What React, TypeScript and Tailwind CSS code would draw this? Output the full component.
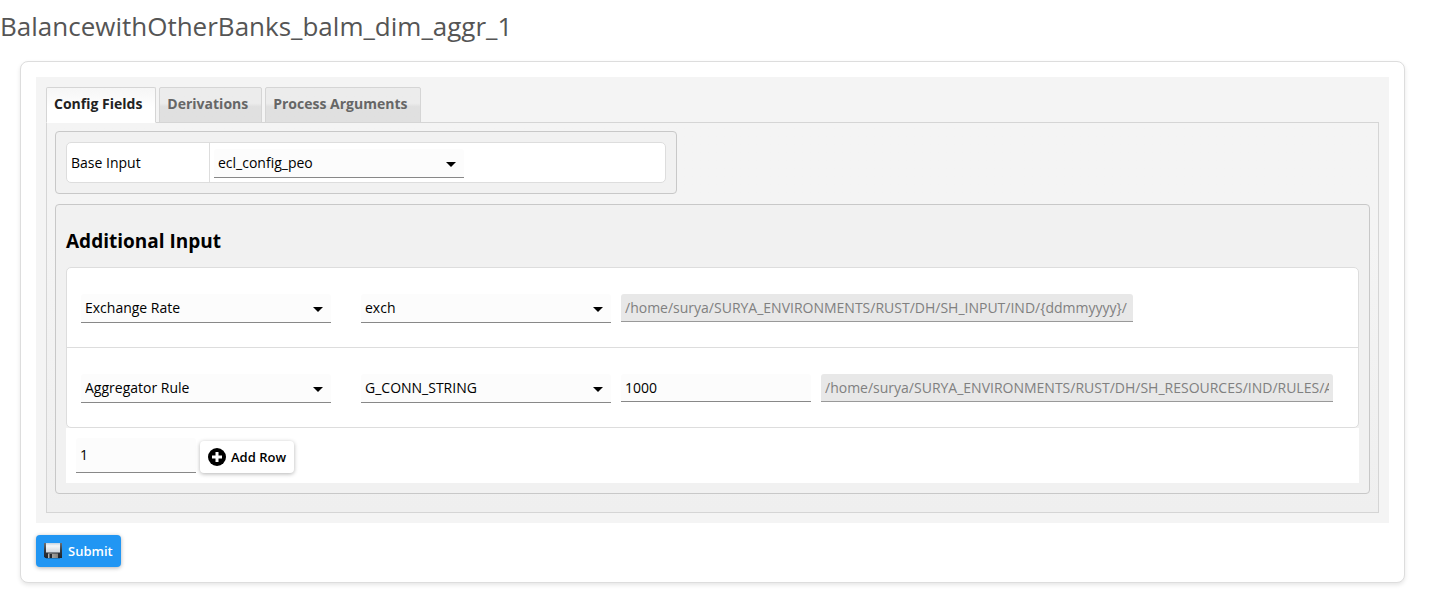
import { useState } from "react";
import type { ReactNode } from "react";

const FIELD = "block w-full rounded-t-[3px] border-b border-[#888] bg-[#fcfcfc] px-1 text-sm outline-none";

function Select({ label, id, options }: { label?: string; id: string; options: string[] }) {
  return (
    <div className="relative w-[250px] shrink-0">
      <select
        id={id}
        aria-label={label}
        className="block h-[29px] w-full appearance-none rounded-t-[3px] border-b border-[#888] bg-[#fcfcfc] px-1 text-sm text-black outline-none"
      >
        {options.map((o) => (
          <option key={o}>{o}</option>
        ))}
      </select>
      <svg className="pointer-events-none absolute top-[13px] right-2 h-[5px] w-[10px]" viewBox="0 0 10 5">
        <path d="M0 0h10L5 5z" fill="#000" />
      </svg>
    </div>
  );
}

function PathField({ label, value }: { label: string; value: string }) {
  return (
    <div className="w-[512px]">
      <input
        aria-label={label}
        disabled
        defaultValue={value}
        className="block h-[28px] w-full rounded-t-[3px] border-b border-[#999] bg-[#e8e8e8] px-1 text-sm text-[#808080]"
      />
    </div>
  );
}

function Fieldset({ children, className }: { children: ReactNode; className: string }) {
  return <div className={"rounded-[4px] border border-[#c8c8c8] bg-[#f1f1f1] p-[10px] " + className}>{children}</div>;
}

function PlusIcon() {
  return (
    <svg className="h-[18px] w-[18px]" viewBox="0 0 18 18" aria-hidden="true">
      <circle cx="9" cy="9" r="9" fill="#000" />
      <path d="M7.500 4h3v3.500H14v3h-3.500V14h-3v-3.500H4v-3h3.500z" fill="#fff" />
    </svg>
  );
}

function SaveIcon() {
  return (
    <svg className="h-[18px] w-[18px]" viewBox="0 0 18 18" aria-hidden="true">
      <defs>
        <linearGradient id="body" x1="0" y1="0" x2="0" y2="1">
          <stop offset="0" stopColor="#6b7076" />
          <stop offset="0.5" stopColor="#33383f" />
          <stop offset="1" stopColor="#20242b" />
        </linearGradient>
        <linearGradient id="label" x1="0" y1="0" x2="0" y2="1">
          <stop offset="0" stopColor="#c5d2dd" />
          <stop offset="0.3" stopColor="#f4f6f8" />
          <stop offset="1" stopColor="#cfd6dc" />
        </linearGradient>
        <linearGradient id="shutter" x1="0" y1="0" x2="1" y2="0">
          <stop offset="0" stopColor="#b5b5b3" />
          <stop offset="1" stopColor="#85827c" />
        </linearGradient>
      </defs>
      <path d="M0 1h18v15H1.300L0 14.700z" fill="url(#body)" />
      <path d="M2 1h14v9.500H2z" fill="url(#label)" />
      <path d="M4 11.500h10V16H4z" fill="url(#shutter)" />
      <path d="M5.500 12H8v4H5.500z" fill="#25282d" />
      <path d="M2 16.500h14" stroke="#1b78bf" strokeWidth="1" />
    </svg>
  );
}

const TABS = ["Config Fields", "Derivations", "Process Arguments"];

export default function App() {
  const [tab, setTab] = useState(0);
  return (
    <main className="bg-white pb-5 font-['Open_Sans','Noto_Sans',sans-serif] text-sm text-black">
      <h1 className="pt-2 text-[26px] leading-9 text-[#555]">BalancewithOtherBanks_balm_dim_aggr_1</h1>
      <section className="mt-[17px] mr-6 ml-5 rounded-lg border border-[#ddd] bg-white p-[15px] shadow-[0_2px_4px_rgba(0,0,0,0.1)]">
        <div className="bg-[#f4f4f4] p-[10px]">
          <div role="tablist" className="relative -mb-px flex gap-[3px]">
            {TABS.map((t, i) => (
              <button
                key={t}
                role="tab"
                aria-selected={i === tab}
                onClick={() => setTab(i)}
                className={
                  "h-9 rounded-t-[2px] border pr-[13px] pb-[2px] pl-[7px] text-sm font-bold " +
                  (i === tab
                    ? "border-[#d5d5d5] border-b-[#fff] bg-linear-to-b from-[#f6f6f6] to-white to-60% text-[#222]"
                    : "border-[#d5d5d5] bg-linear-to-b from-[#ececec] from-45% to-[#e0e0e0] to-55% text-[#666]")
                }
              >
                {t}
              </button>
            ))}
          </div>
          <div className="border border-[#d5d5d5] bg-linear-to-b from-[#f4f4f4] from-30% to-[#efefef] px-2 pt-2 pb-[18px]">
            <Fieldset className="max-w-[622px]">
              <div className="flex h-[41px] rounded-[5px] border border-[#ddd] bg-white">
                <label htmlFor="base" className="flex w-[143px] items-center border-r border-[#ddd] px-1">
                  Base Input
                </label>
                <div className="px-1 pt-[6px]">
                  <Select id="base" options={["ecl_config_peo"]} />
                </div>
              </div>
            </Fieldset>
            <Fieldset className="mt-[10px]">
              <h2 className="py-3 text-[19px] leading-7 font-bold">Additional Input</h2>
              <div className="rounded-[5px] border border-[#ddd] bg-white">
                <div className="flex h-20 items-start gap-[30px] border-b border-[#ddd] px-[14px] pt-[26px]">
                  <Select id="type-1" label="Input type" options={["Exchange Rate"]} />
                  <div className="flex gap-[10px]">
                    <Select id="source-1" label="Source" options={["exch"]} />
                    <PathField label="Path" value="/home/surya/SURYA_ENVIRONMENTS/RUST/DH/SH_INPUT/IND/{ddmmyyyy}/" />
                  </div>
                </div>
                <div className="flex h-[79px] items-start gap-[30px] px-[14px] pt-[26px]">
                  <Select id="type-2" label="Input type" options={["Aggregator Rule"]} />
                  <div className="flex gap-[10px]">
                    <Select id="source-2" label="Source" options={["G_CONN_STRING"]} />
                    <div className="w-[190px]">
                      <input aria-label="Limit" defaultValue="1000" className={FIELD + " h-[28px]"} />
                    </div>
                    <PathField
                      label="Path"
                      value="/home/surya/SURYA_ENVIRONMENTS/RUST/DH/SH_RESOURCES/IND/RULES/AGGREGATOR_RULES"
                    />
                  </div>
                </div>
              </div>
              <div className="flex items-end gap-1 bg-white p-[10px]">
                <div className="w-[120px]">
                  <input aria-label="Row count" defaultValue="1" className={FIELD + " h-[35px] pb-[2px]"} />
                </div>
                <button className="flex h-8 items-center gap-[5px] rounded-[4px] bg-white px-2 text-[13px] font-semibold shadow-[0_1px_4px_rgba(0,0,0,0.3)]">
                  <PlusIcon />
                  Add Row
                </button>
              </div>
            </Fieldset>
          </div>
        </div>
        <button className="mt-3 flex h-8 items-center gap-[6px] rounded-[4px] bg-[#2196f3] px-2 text-[13px] font-semibold text-white shadow-[0_1px_4px_rgba(0,0,0,0.3)]">
          <SaveIcon />
          Submit
        </button>
      </section>
    </main>
  );
}
